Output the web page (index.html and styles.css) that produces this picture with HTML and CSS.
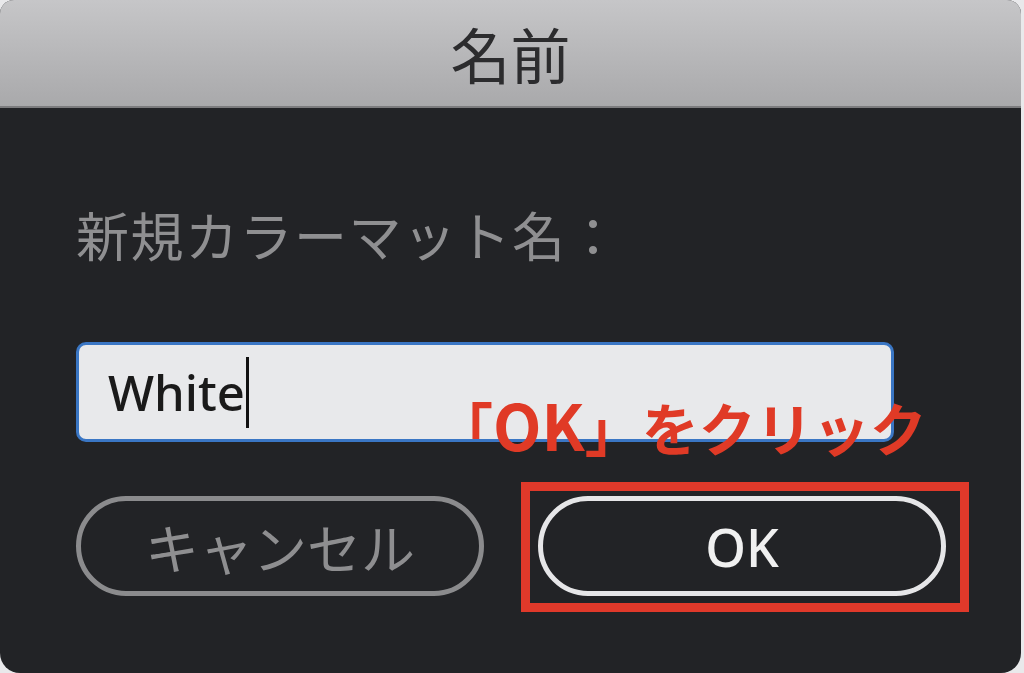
FILE: index.html
```html
<!DOCTYPE html>
<html lang="ja">
<head>
    <meta charset="UTF-8">
    <title>名前</title>
    <link rel="stylesheet" href="styles.css">
</head>
<body>

<div class="dialog">
    <header class="titlebar">名前</header>

    <div class="dialog-body">
        <label class="field-label" for="matte-name">新規カラーマット名：</label>

        <div class="name-input" id="matte-name">
            <span class="value">White</span><span class="caret"></span>
        </div>

        <div class="buttons">
            <button class="btn btn-cancel">キャンセル</button>
            <button class="btn btn-ok">OK</button>
        </div>

        <!-- annotation -->
        <p class="note">「<span class="note-latin">OK</span>」をクリック</p>
        <div class="highlight"></div>
    </div>
</div>

</body>
</html>
```

FILE: styles.css
```css
body {
    margin: 0;
    background: #e9e9eb;
    font-family: "Noto Sans", "Noto Sans CJK JP", sans-serif;
    overflow: hidden;
}
.dialog {
    width: 1021px;
    height: 673px;
    background: #222326;
    border-radius: 14px 14px 20px 20px;
    overflow: hidden;
    display: flex;
    flex-direction: column;
}
.titlebar {
    height: 108px;
    box-sizing: border-box;
    background: linear-gradient(#c6c6c8, #a9a9ab);
    border-bottom: 2px solid #7c7c7e;
    color: #2c2c2e;
    font-family: "Noto Sans CJK JP", sans-serif;
    font-size: 60px;
    line-height: 106px;
    text-align: center;
}
.dialog-body {
    position: relative;
    flex: 1;
    padding: 100px 0 0 76px;
    display: flex;
    flex-direction: column;
    align-items: flex-start;
}
.field-label {
    color: #8f8f91;
    font-family: "Noto Sans CJK JP", sans-serif;
    font-size: 53px;
    line-height: 1;
    letter-spacing: 1.5px;
}
.name-input {
    margin-top: 81px;
    width: 818px;
    height: 100px;
    box-sizing: border-box;
    border: 3px solid #3a76c4;
    border-radius: 10px;
    background: #e8e9eb;
    padding-left: 29px;
    display: flex;
    align-items: center;
    color: #1a1a1a;
    font-size: 49px;
    font-weight: 500;
}
.caret {
    width: 3px;
    height: 71px;
    margin-left: 1px;
    background: #111;
}
.buttons {
    margin-top: 54px;
    display: flex;
    gap: 54px;
}
.btn {
    width: 408px;
    height: 100px;
    border-radius: 50px;
    background: transparent;
    font-family: "Noto Sans", "Noto Sans CJK JP", sans-serif;
    padding: 0;
}
.btn-cancel {
    border: 5px solid #8b8b8d;
    color: #8e8e90;
    font-size: 54px;
}
.btn-ok {
    border: 5px solid #e6e6e8;
    color: #f0f0f0;
    font-size: 52px;
    font-weight: 500;
}
.note {
    position: absolute;
    left: 436px;
    top: 287px;
    margin: 0;
    color: #e03a26;
    font-family: "Noto Sans CJK JP", sans-serif;
    font-weight: bold;
    font-size: 57px;
    line-height: 57px;
}
.note-latin {
    font-size: 63px;
    line-height: 57px;
}
.highlight {
    position: absolute;
    left: 521px;
    top: 374px;
    width: 448px;
    height: 130px;
    box-sizing: border-box;
    border: 9px solid #e0392a;
}
```
